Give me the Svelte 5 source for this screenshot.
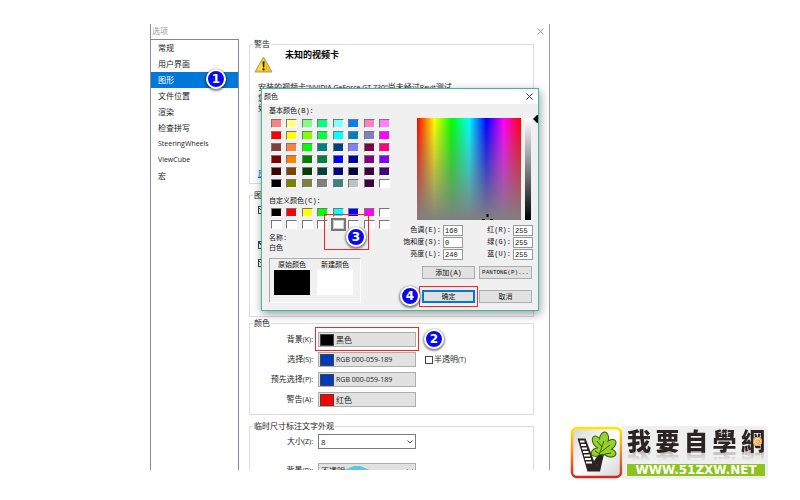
<script>
  const pages = [
    "常规",
    "用户界面",
    "图形",
    "文件位置",
    "渲染",
    "检查拼写",
    "SteeringWheels",
    "ViewCube",
    "宏",
  ];

  const basicColors = [
    "#ff8080", "#ffff80", "#80ff80", "#00ff80", "#80ffff", "#0080ff", "#ff80c0", "#ff80ff",
    "#ff0000", "#ffff00", "#80ff00", "#00ff40", "#00ffff", "#0080c0", "#8080c0", "#ff00ff",
    "#804040", "#ff8040", "#00ff00", "#008080", "#004080", "#8080ff", "#800040", "#ff0080",
    "#800000", "#ff8000", "#008000", "#008040", "#0000ff", "#0000a0", "#800080", "#8000ff",
    "#400000", "#804000", "#004000", "#004040", "#000080", "#000040", "#400040", "#400080",
    "#000000", "#808000", "#808040", "#808080", "#408080", "#c0c0c0", "#400040", "#ffffff",
  ];

  const customColors = [
    "#000000", "#ff0000", "#ffff00", "#00ff00", "#00ffff", "#0000ff", "#ff00ff", "#ffffff",
    "#ffffff", "#ffffff", "#ffffff", "#ffffff", "#ffffff", "#ffffff", "#ffffff", "#ffffff",
  ];

  const viewColors = [
    { id: "bg", label: "背景", key: "(K):", text: "黑色", color: "#000000" },
    { id: "sel", label: "选择", key: "(S):", text: "RGB 000-059-189", color: "#003bbd" },
    { id: "pre", label: "预先选择", key: "(P):", text: "RGB 000-059-189", color: "#003bbd" },
    { id: "warn", label: "警告", key: "(A):", text: "红色", color: "#ff0000" },
  ];

  const channels = [
    { id: "hue", label: "色调(E):", value: "160" },
    { id: "red", label: "红(R):", value: "255" },
    { id: "sat", label: "饱和度(S):", value: "0" },
    { id: "green", label: "绿(G):", value: "255" },
    { id: "lum", label: "亮度(L):", value: "240" },
    { id: "blue", label: "蓝(U):", value: "255" },
  ];

  // lobes of the leaf in the logo: centre, radii, tilt
  const lobes = [
    [28, 16, 3.5, 6, -30],
    [35, 13, 4, 6.5, 8],
    [41, 19, 3.8, 6.5, 50],
    [41, 27, 3.5, 5.5, 100],
    [28, 26, 3.5, 5.5, 70],
    [34, 23, 5, 6, 20],
  ];

  let page = $state("图形");
  let selected = $state(12);
</script>

<div class="page">
  <main class="options">
    <header class="options-title">
      <span>选项</span>
      <button class="close" aria-label="close options">
        <svg width="7" height="7" viewBox="0 0 7 7"><path d="M0.5 0.5L6.5 6.5M6.5 0.5L0.5 6.5" /></svg>
      </button>
    </header>

    <div class="options-body">
      <nav class="list">
        {#each pages as name}
          <button
            class="list-item"
            class:active={page === name}
            class:latin={/^[A-Z]/.test(name)}
            onclick={() => (page = name)}
          >
            {name}
            {#if name === "图形"}<span class="badge one">1</span>{/if}
          </button>
        {/each}
      </nav>

      <div class="content">
        <fieldset class="warning">
          <legend>警告</legend>
          <div class="warning-head">
            <svg width="19" height="17" viewBox="0 0 19 17">
              <path d="M9.5 1L18 16H1Z" fill="#f2c21b" stroke="#a89a70" stroke-linejoin="round" />
              <path d="M9.5 2.5L3 14.5H9.5Z" fill="#ffe04a" />
              <path d="M8.4 5.5H10.6L10.1 11.5H8.9Z" fill="#222" />
              <circle cx="9.5" cy="13.4" r="1.1" fill="#222" />
            </svg>
            <strong>未知的视频卡</strong>
          </div>
          <p>
            安装的视频卡<span class="latin">"NVIDIA GeForce GT 730"</span>尚未经过<span class="latin"> Revit </span>测试<br />
            您的显卡<br />
            如果
          </p>
          <a href="#graphics">应用</a>
        </fieldset>

        <fieldset class="mode">
          <legend>图形模式</legend>
          <input type="checkbox" checked aria-label="硬件加速" />
          <input type="checkbox" checked aria-label="简化显示" />
          <input type="checkbox" checked aria-label="反失真" />
        </fieldset>

        <fieldset class="colors">
          <legend>颜色</legend>
          {#each viewColors as row}
            <div class="row">
              <label for={row.id}>{row.label}<span class="latin">{row.key}</span></label>
              <div class="control">
                <button class="color-button" class:latin={row.text.startsWith("RGB")} id={row.id}>
                  <i style="background: {row.color}"></i>{row.text}
                </button>
                {#if row.id === "bg"}
                  <span class="mark mark-two"></span>
                  <span class="badge two">2</span>
                {/if}
              </div>
              {#if row.id === "sel"}
                <label class="check"><input type="checkbox" /><span>半透明<span class="latin">(T)</span></span></label>
              {/if}
            </div>
          {/each}
        </fieldset>

        <fieldset class="dimension">
          <legend>临时尺寸标注文字外观</legend>
          <div class="row">
            <label for="size">大小<span class="latin">(Z):</span></label>
            <div class="control">
              <select id="size"><option>8</option><option>10</option></select>
              <svg class="arrow" width="6" height="4" viewBox="0 0 6 4"><path d="M0.5 0.5L3 3L5.5 0.5" /></svg>
            </div>
          </div>
          <div class="row">
            <label for="back">背景<span class="latin">(B):</span></label>
            <div class="control">
              <select id="back" class="grey"><option>不透明</option><option>透明</option></select>
              <svg class="arrow" width="6" height="4" viewBox="0 0 6 4"><path d="M0.5 0.5L3 3L5.5 0.5" /></svg>
              <svg class="hex" width="26" height="12" viewBox="0 0 26 12"><path d="M0 6L10 2H16L26 6V12H0Z" fill="#5fc3ea" /></svg>
            </div>
          </div>
        </fieldset>
      </div>
    </div>

    <section class="dialog">
      <header class="dialog-title">
        <span>颜色</span>
        <button class="close" aria-label="close colors">
          <svg width="7" height="7" viewBox="0 0 7 7"><path d="M0.5 0.5L6.5 6.5M6.5 0.5L0.5 6.5" /></svg>
        </button>
      </header>
      <div class="dialog-body">
        <div class="left">
          <h2>基本颜色(B):</h2>
          <div class="swatches">
            {#each basicColors as color}
              <button class="swatch" style="background: {color}" aria-label={color}></button>
            {/each}
          </div>
          <h2 class="custom-title">自定义颜色(C):</h2>
          <div class="swatches custom">
            {#each customColors as color, i}
              <button
                class="swatch"
                class:selected={i === selected}
                style="background: {color}"
                aria-label={color}
                onclick={() => (selected = i)}
              ></button>
            {/each}
            <span class="mark mark-three"></span>
            <span class="badge three">3</span>
          </div>
          <p class="name">名称:<br />白色</p>
          <div class="preview">
            <div>原始颜色<i class="old"></i></div>
            <div>新建颜色<i class="new"></i></div>
          </div>
        </div>

        <div class="right">
          <div class="spectrum">
            <div class="hue">
              <svg class="cross" width="11" height="6" viewBox="0 0 11 6"><path d="M0 5H3V6H0ZM8 5H11V6H8ZM4.5 0H6.5V3H4.5Z" /></svg>
            </div>
            <div class="lum">
              <svg class="pointer" width="5" height="8" viewBox="0 0 5 8"><path d="M0 4L4 0H5V8H4Z" /></svg>
            </div>
          </div>
          <div class="channels">
            {#each channels as ch}
              <label for={ch.id}>{ch.label}</label>
              <input id={ch.id} type="text" value={ch.value} />
            {/each}
          </div>
          <div class="buttons">
            <button>添加(A)</button>
            <button class="small">PANTONE(P)...</button>
            <div class="ok-wrap">
              <button class="ok">确定</button>
              <span class="mark mark-four"></span>
              <span class="badge four">4</span>
            </div>
            <button>取消</button>
          </div>
        </div>
      </div>
    </section>
  </main>

  <aside class="brand">
    <svg width="53" height="53" viewBox="0 0 53 53">
      <defs>
        <linearGradient id="edge" x1="0" y1="0" x2="0" y2="1">
          <stop offset="0" stop-color="#ffe600" />
          <stop offset="0.5" stop-color="#f58a1e" />
          <stop offset="1" stop-color="#e0201b" />
        </linearGradient>
        <linearGradient id="face" x1="0" y1="0" x2="1" y2="1">
          <stop offset="0" stop-color="#d4d4d4" />
          <stop offset="0.5" stop-color="#ffffff" />
          <stop offset="1" stop-color="#d4d4d4" />
        </linearGradient>
      </defs>
      <rect x="3" y="2" width="49" height="49" rx="5" fill="url(#face)" stroke="url(#edge)" stroke-width="2.5" />
      <path d="M8.5 12.5H16.500L25 35L29 29L35 28L31 45.500H18.500Z" fill="#2b2422" />
      <path d="M11 15.500H15.500M12 19H17M13 22.500H18M14 26H19.500M15 29.500H21M16 33H22M17 36.500H23" stroke="#fff" stroke-width="1.8" />
      {#each lobes as [x, y, rx, ry, tilt]}
        <ellipse cx={x} cy={y} {rx} {ry} transform="rotate({tilt} {x} {y})" fill="none" stroke="#3b5a12" stroke-width="2" />
      {/each}
      {#each lobes as [x, y, rx, ry, tilt]}
        <ellipse cx={x} cy={y} {rx} {ry} transform="rotate({tilt} {x} {y})" fill="#93d32c" />
      {/each}
      <path d="M28 40C28 34 30 29 35 15M32 26L41 19M31 29L42 27M31 28L26 25M33 21L28 15" fill="none" stroke="#3b5a12" />
      <path d="M26 37L30 29L33 29L30 40Z" fill="#2b2422" />
    </svg>
    <div class="brand-text">
      <div class="brand-name">
        <span>我</span><span>要</span><span>自</span><span>學</span><span>網</span>
        <svg width="9" height="9" viewBox="0 0 9 9">
          <circle cx="4.500" cy="4.500" r="4.500" fill="#efefef" />
          <path d="M7.500 7A4 4 0 1 1 8.500 4.500C8.300 6.300 6.500 6 6.500 4.500V3M6.500 4.500A1.800 1.800 0 1 1 6.400 4" fill="none" stroke="#f39a2b" stroke-width="1.2" />
        </svg>
      </div>
      <a href="#home">WWW.51ZXW.NET</a>
    </div>
  </aside>
</div>

<style>
  :global(body) {
    margin: 0;
    background: #fff;
  }

  .page {
    display: grid;
    grid-template-columns: 3fr 8fr 5fr;
    grid-template-rows: minmax(0, 1fr);
    box-sizing: border-box;
    height: 100vh;
    padding: 24px 0 30px;
    font: 8px/12px "Open Sans", "Noto Sans CJK SC", sans-serif;
    color: #222;
  }

  button,
  input,
  select {
    box-sizing: border-box;
    margin: 0;
    padding: 0;
    font: inherit;
    color: inherit;
    border-radius: 0;
  }

  .options {
    grid-column: 2;
    position: relative;
    display: flex;
    flex-direction: column;
    overflow: hidden;
    border-left: 1px solid #8c8c8c;
    border-right: 1px solid #a0a0a0;
  }

  .options-title {
    flex: none;
    display: flex;
    justify-content: space-between;
    align-items: center;
    height: 14px;
    padding: 0 5px 0 1px;
    color: #999;
  }

  .close {
    display: flex;
    border: 0;
    background: none;
  }

  .close svg {
    fill: none;
    stroke: #333;
  }

  .options-title .close svg {
    stroke: #999;
  }

  .options-body {
    flex: 1;
    display: flex;
    min-height: 0;
  }

  .list {
    flex: none;
    box-sizing: border-box;
    width: 88px;
    margin-top: 1px;
    border-top: 1px solid #828790;
    border-right: 1px solid #828790;
  }

  .list-item {
    position: relative;
    display: block;
    width: 100%;
    height: 16px;
    padding-left: 7px;
    border: 0;
    background: none;
    text-align: left;
  }

  .latin {
    font-size: 7px;
  }

  .list-item.active {
    background: #0078d7;
    color: #fff;
  }

  .content {
    flex: 1;
    padding: 0 15px 0 10px;
  }

  fieldset {
    box-sizing: border-box;
    min-width: 0;
    margin: 0;
    padding: 0 0 0 8px;
    border: 1px solid #dcdcdc;
  }

  legend {
    margin-left: -5px;
    padding: 0 1px;
    height: 12px;
  }

  .warning {
    height: 146px;
    margin-bottom: 5px;
  }

  .warning-head {
    display: flex;
    gap: 12px;
    margin: 6px 0 9px -4px;
  }

  .warning-head strong {
    margin-top: -7px;
    font-size: 9px;
    color: #000;
  }

  .warning p {
    margin: 0 0 54px;
    line-height: 10px;
  }

  .warning a {
    color: #0066cc;
  }

  .mode {
    display: flex;
    flex-direction: column;
    height: 128px;
    padding-top: 5px;
  }

  .mode input:nth-of-type(2) {
    margin: 27px 0 10px;
  }

  input[type="checkbox"] {
    flex: none;
    width: 8px;
    height: 8px;
    appearance: none;
    border: 1px solid #444;
    background: #fff;
  }

  input[type="checkbox"]:checked {
    background: linear-gradient(45deg, #fff 35%, #555 35% 50%, #fff 50%);
  }

  .colors {
    height: 98px;
    margin-bottom: 5px;
    padding-top: 3px;
  }

  .dimension {
    height: 98px;
    padding-top: 2px;
  }

  .row {
    display: grid;
    grid-template-columns: 55px 98px 1fr;
    column-gap: 5px;
    align-items: center;
    height: 15px;
    margin-bottom: 5px;
  }

  .dimension .row {
    margin-bottom: 14px;
  }

  .row > label:first-child {
    text-align: right;
    white-space: nowrap;
  }

  .control {
    position: relative;
    display: flex;
    height: 15px;
  }

  .color-button {
    display: flex;
    align-items: center;
    gap: 2px;
    width: 100%;
    padding-left: 1px;
    border: 1px solid #adadad;
    background: #e1e1e1;
  }

  .color-button i {
    box-sizing: border-box;
    width: 14px;
    height: 12px;
    border: 1px solid #444;
  }

  .row .check {
    display: flex;
    align-items: center;
    gap: 1px;
    padding-left: 4px;
  }

  select {
    width: 100%;
    padding-left: 2px;
    appearance: none;
    border: 1px solid #7a7a7a;
    background: #fff;
  }

  select.grey {
    background: #e1e1e1;
    border-color: #adadad;
  }

  .arrow {
    position: absolute;
    right: 3px;
    top: 6px;
    fill: none;
    stroke: #444;
  }

  .hex {
    position: absolute;
    left: 26px;
    top: 1px;
  }

  .dialog {
    position: absolute;
    left: 110px;
    top: 64px;
    box-sizing: border-box;
    width: 278px;
    border: 1px solid #3dbb9b;
    background: #f0f0f0;
    box-shadow: 1px 3px 9px rgba(0, 0, 0, 0.4);
    font: 7px/10px "Liberation Mono", "Noto Sans CJK SC", monospace;
    color: #111;
  }

  .dialog-title {
    display: flex;
    justify-content: space-between;
    align-items: center;
    height: 15px;
    padding: 0 5px 0 2px;
    background: #fff;
  }

  .dialog-body {
    display: flex;
    justify-content: space-between;
    padding: 2px 5px 7px 7px;
  }

  .left {
    width: 121px;
  }

  .left h2 {
    margin: 0 0 3px;
    font: inherit;
    white-space: nowrap;
  }

  .left .custom-title {
    margin: 8px 0 2px;
  }

  .swatches {
    position: relative;
    display: grid;
    grid-template-columns: repeat(8, 11px);
    justify-content: space-between;
    row-gap: 3px;
    padding-left: 2px;
  }

  .swatch {
    height: 9px;
    border: 1px solid;
    border-color: #777 #fff #fff #777;
  }

  .swatch.selected {
    outline: 2px solid #777;
    border-color: #ccc;
  }

  .name {
    margin: 4px 0 5px;
  }

  .preview {
    display: flex;
    gap: 7px;
    box-sizing: border-box;
    width: 92px;
    height: 45px;
    padding: 1px 4px;
    border: 1px solid;
    border-color: #aaa #fff #fff #aaa;
  }

  .preview div {
    width: 36px;
    text-align: center;
  }

  .preview i {
    display: block;
    height: 25px;
  }

  .old {
    background: #000;
  }

  .new {
    background: #fff;
  }

  .right {
    width: 116px;
    padding-top: 12px;
  }

  .spectrum {
    display: flex;
    gap: 4px;
    height: 102px;
    margin-bottom: 5px;
  }

  .hue {
    position: relative;
    width: 104px;
    background:
      linear-gradient(rgba(128, 128, 128, 0), #808080),
      linear-gradient(90deg, #f00, #ff0, #0f0, #0ff, #00f, #f0f, #f00);
  }

  .cross {
    position: absolute;
    left: 65px;
    bottom: 0;
  }

  .lum {
    position: relative;
    width: 6px;
    background: linear-gradient(#fff, #808080 50%, #000);
  }

  .pointer {
    position: absolute;
    left: 8px;
    top: -3px;
  }

  .channels {
    display: grid;
    grid-template-columns: 24px 20px 1fr 20px;
    gap: 1px 2px;
    margin-bottom: 6px;
  }

  .channels label {
    justify-self: end;
    white-space: nowrap;
  }

  .channels input {
    width: 20px;
    height: 11px;
    padding-left: 1px;
    border: 1px solid #999;
    background: #fff;
  }

  .buttons {
    display: grid;
    grid-template-columns: 53px 53px;
    gap: 11px 4px;
    padding-left: 5px;
  }

  .buttons button {
    width: 100%;
    height: 13px;
    border: 1px solid #adadad;
    background: #e1e1e1;
    white-space: nowrap;
  }

  .buttons .small {
    font-size: 6px;
  }

  .ok-wrap {
    position: relative;
    display: flex;
  }

  .buttons .ok {
    border: 2px solid #0078d7;
    line-height: 8px;
  }

  .mark {
    position: absolute;
    border: 1px solid #f22;
    pointer-events: none;
  }

  .mark-two {
    inset: -5px -3px -4px;
  }

  .mark-three {
    left: 55px;
    top: 6px;
    width: 43px;
    height: 34px;
  }

  .mark-four {
    inset: -4px -3px;
  }

  .badge {
    position: absolute;
    z-index: 1;
    box-sizing: border-box;
    width: 20px;
    height: 20px;
    border: 2px solid #fff;
    border-radius: 50%;
    background: #0a0aee;
    box-shadow: 0 1px 2px 1px rgba(0, 0, 0, 0.45);
    color: #fff;
    font: bold 12px/16px "DejaVu Sans", sans-serif;
    text-align: center;
    pointer-events: none;
  }

  .one {
    right: 12px;
    top: -3px;
  }

  .two {
    left: 106px;
    top: -3px;
  }

  .three {
    left: 77px;
    top: 19px;
  }

  .four {
    right: 55px;
    top: -4px;
  }

  .brand {
    grid-column: 3;
    align-self: end;
    display: flex;
    width: 199px;
    margin: 0 0 -9px 19px;
  }

  .brand-text {
    flex: 1;
    padding: 2px 3px 3px 5px;
    border-radius: 0 4px 4px 0;
    background: #efefef;
  }

  .brand-name {
    position: relative;
    display: flex;
    justify-content: space-between;
    height: 24px;
    font: 900 24px/24px "Noto Sans CJK TC", sans-serif;
    color: #2b2422;
    -webkit-box-reflect: below -3px linear-gradient(transparent 50%, rgba(0, 0, 0, 0.35));
  }

  .brand-name svg {
    position: absolute;
    right: 3px;
    top: 9px;
  }

  .brand-text a {
    display: block;
    position: relative;
    margin-top: 12px;
    background: #8dc21f;
    color: #fff;
    font: bold 12px/12px "DejaVu Sans", sans-serif;
    text-align: center;
    text-decoration: none;
  }
</style>
